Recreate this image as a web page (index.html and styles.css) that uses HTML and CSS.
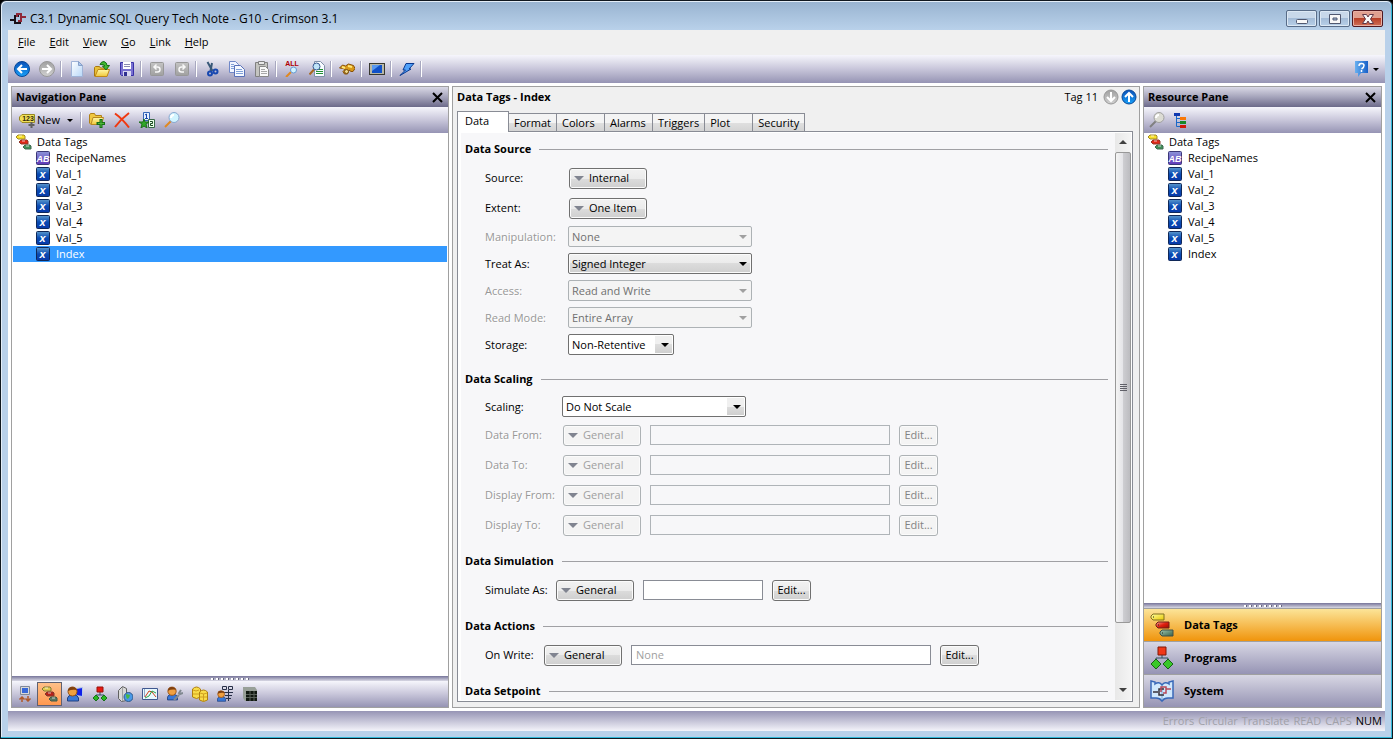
FILE: index.html
```html
<!DOCTYPE html>
<html lang="en">
<head>
  <meta charset="UTF-8" />
  <meta name="viewport" content="width=device-width, initial-scale=1.0" />
  <title>C3.1 Dynamic SQL Query Tech Note - G10 - Crimson 3.1</title>
  <link rel="stylesheet" href="styles.css">
</head>
<body>
  <!-- Shared icons -->
  <svg class="defs" width="0" height="0" aria-hidden="true">
    <defs>
      <linearGradient id="blueBall" x1="0" y1="0" x2="0" y2="1"><stop offset="0" stop-color="#0a50b8"/><stop offset="1" stop-color="#18a0f8"/></linearGradient>
      <linearGradient id="grayBall" x1="0" y1="0" x2="0" y2="1"><stop offset="0" stop-color="#a0a0a0"/><stop offset="1" stop-color="#d0d0d0"/></linearGradient>
      <linearGradient id="grayTile" x1="0" y1="0" x2="0" y2="1"><stop offset="0" stop-color="#c4c4c4"/><stop offset="1" stop-color="#a0a0a0"/></linearGradient>
      <linearGradient id="numberTile" x1="0" y1="0" x2="0" y2="1"><stop offset="0" stop-color="#5a98cc"/><stop offset="0.5" stop-color="#0a4cb4"/><stop offset="1" stop-color="#0838a8"/></linearGradient>
      <linearGradient id="stringTile" x1="0" y1="0" x2="0" y2="1"><stop offset="0" stop-color="#8c94d8"/><stop offset="1" stop-color="#6038b8"/></linearGradient>
      <linearGradient id="yellowTag" x1="0" y1="0" x2="1" y2="1"><stop offset="0" stop-color="#ffffa0"/><stop offset="1" stop-color="#e8c800"/></linearGradient>
      <linearGradient id="redTag" x1="0" y1="0" x2="1" y2="1"><stop offset="0" stop-color="#f8a090"/><stop offset="0.5" stop-color="#e02010"/><stop offset="1" stop-color="#981000"/></linearGradient>
      <linearGradient id="greenTag" x1="0" y1="0" x2="1" y2="1"><stop offset="0" stop-color="#a0c8b0"/><stop offset="1" stop-color="#386048"/></linearGradient>
      <linearGradient id="folder" x1="0" y1="0" x2="0" y2="1"><stop offset="0" stop-color="#fff8a8"/><stop offset="1" stop-color="#f0c838"/></linearGradient>
      <linearGradient id="paper" x1="0" y1="0" x2="1" y2="1"><stop offset="0" stop-color="#ffffff"/><stop offset="1" stop-color="#b8d8f8"/></linearGradient>
      <linearGradient id="helpTile" x1="0" y1="0" x2="1" y2="0"><stop offset="0" stop-color="#68b0f0"/><stop offset="1" stop-color="#1860c8"/></linearGradient>
    </defs>
    <symbol id="tags" viewBox="0 0 24 24">
      <path d="M3 1h11v6H3L1 5V3z" fill="url(#yellowTag)" stroke="#807020"/>
      <path d="M8 9h11v6H8l-2-2v-2z" fill="url(#redTag)" stroke="#702018"/>
      <path d="M12 17h11v6H12l-2-2v-2z" fill="url(#greenTag)" stroke="#405048"/>
      <path d="M3 4h1M8 12h1M12 20h1" stroke="#222"/>
    </symbol>
    <symbol id="tags-small" viewBox="0 0 16 16">
      <path d="M2 1h6l1 1v3H2L0 3z" fill="#f8e028" stroke="#a08828"/>
      <path d="M5 6h6l1 1v3H5L3 8z" fill="#e02818" stroke="#903828"/>
      <path d="M9 11h5l1 1v3H9l-2-2z" fill="#409058" stroke="#406850"/>
      <path d="M3 2h3M6 7h3M10 12h3" stroke="#fff" stroke-opacity="0.7"/>
    </symbol>
    <symbol id="tags-muted" viewBox="0 0 16 16">
      <path d="M2 1h6l1 1v3H2L0 3z" fill="#e0cc50" stroke="#807838"/>
      <path d="M5 6h6l1 1v3H5L3 8z" fill="#b82018" stroke="#803830"/>
      <path d="M9 11h5l1 1v3H9l-2-2z" fill="#587860" stroke="#405848"/>
      <path d="M3 2h3M6 7h3M10 12h3" stroke="#fff" stroke-opacity="0.7"/>
    </symbol>
    <symbol id="tile-x" viewBox="0 0 14 14">
      <rect x="0.5" y="0.5" width="13" height="13" rx="1" fill="url(#numberTile)" stroke="#102858"/>
      <text x="6.500" y="10.500" class="tile-text">x</text>
    </symbol>
    <symbol id="tile-ab" viewBox="0 0 14 14">
      <rect x="0.5" y="0.5" width="13" height="13" rx="1" fill="url(#stringTile)" stroke="#3c3878"/>
      <text x="7" y="10.500" class="tile-text tile-letters">AB</text>
    </symbol>
    <symbol id="programs" viewBox="0 0 24 24">
      <path d="M12 8v4M6 15v-3h12v3" fill="none" stroke="#305060"/>
      <path d="M8 1h8v8H8z" fill="#f03818" stroke="#801808"/>
      <path d="M6 13l5 5-5 5-5-5zM18 13l5 5-5 5-5-5z" fill="#38c828" stroke="#186018"/>
    </symbol>
    <symbol id="programs-small" viewBox="0 0 16 16">
      <path d="M8 6v3M4 12V9h8v3" fill="none" stroke="#305060"/>
      <path d="M5 1h6v5H5z" fill="#e81810" stroke="#981008"/>
      <path d="M4 9l3 3-3 3-3-3zM12 9l3 3-3 3-3-3z" fill="#28b820" stroke="#187018"/>
    </symbol>
    <symbol id="lens" viewBox="0 0 16 16">
      <path d="M1 15l6-6" stroke="#e08820" stroke-width="2"/>
      <circle cx="10" cy="5.500" r="5" fill="#d0f4ff" stroke="#88a8d0"/>
      <path d="M7 6q0-3 3-3" fill="none" stroke="#fff" stroke-width="2"/>
    </symbol>
    <symbol id="lens-off" viewBox="0 0 16 16">
      <path d="M1 15l6-6" stroke="#808080" stroke-width="2"/>
      <circle cx="10" cy="5.500" r="5" fill="#dcdcd4" stroke="#a0a0a0"/>
      <path d="M7 6q0-3 3-3" fill="none" stroke="#fff" stroke-width="2"/>
    </symbol>
    <symbol id="close" viewBox="0 0 11 11">
      <path d="M1 1l9 9M10 1l-9 9" stroke="#000" stroke-width="2"/>
    </symbol>
    <symbol id="user" viewBox="0 0 12 16">
      <path d="M0.500 15v-3q1-3 4-3h3q3 0 4 3v3z" fill="#3878d8" stroke="#204080"/>
      <circle cx="5.500" cy="5.500" r="4.500" fill="#f0a040" stroke="#985010"/>
      <path d="M1 5q0-4 4-4t5 3q-5-1-9 1z" fill="#804010"/>
    </symbol>
  </svg>

  <div class="window">
    <header class="titlebar">
      <svg class="app-logo" width="16" height="12" viewBox="0 0 16 12" fill="none">
        <path d="M0 7h5M9 3H5v7h5V8" stroke="#181018" stroke-width="2"/>
        <path d="M7 4V1h4v7H8M11 4h5" stroke="#902838" stroke-width="2"/>
      </svg>
      <h1 class="window-title">C3.1 Dynamic SQL Query Tech Note - G10 - Crimson 3.1</h1>
      <div class="window-buttons">
        <button class="window-button" aria-label="Minimize"><svg width="12" height="10" viewBox="0 0 12 10"><rect x="0.5" y="5.500" width="11" height="4" rx="1" fill="#f8f8f8" stroke="#505870"/></svg></button>
        <button class="window-button" aria-label="Maximize"><svg width="12" height="10" viewBox="0 0 12 10"><path d="M0.500 0.500h11v9h-11zM4 4h4v2H4z" fill="#f8f8f8" fill-rule="evenodd" stroke="#505870"/></svg></button>
        <button class="window-button window-close" aria-label="Close"><svg width="12" height="10" viewBox="0 0 12 10"><path d="M0.500 0.500h4L6 3l1.500-2.500h4L8.500 5l3 4.500h-4L6 7 4.500 9.500h-4l3-4.500z" fill="#f8f8f8" stroke="#603848"/></svg></button>
      </div>
    </header>

    <div class="client">
      <nav class="menubar">
        <a href="#"><u>F</u>ile</a>
        <a href="#"><u>E</u>dit</a>
        <a href="#"><u>V</u>iew</a>
        <a href="#"><u>G</u>o</a>
        <a href="#"><u>L</u>ink</a>
        <a href="#"><u>H</u>elp</a>
      </nav>

      <div class="toolbar main-toolbar">
        <button class="tool" aria-label="Back"><svg viewBox="0 0 16 16"><circle cx="8" cy="8" r="7.500" fill="url(#blueBall)" stroke="#084898"/><path d="M13 8H4M8 4L4 8l4 4" fill="none" stroke="#fff" stroke-width="2"/></svg></button>
        <button class="tool" aria-label="Forward"><svg viewBox="0 0 16 16"><circle cx="8" cy="8" r="7.500" fill="url(#grayBall)" stroke="#989898"/><path d="M3 8h9M8 4l4 4-4 4" fill="none" stroke="#fff" stroke-width="2"/></svg></button>
        <span class="separator"></span>
        <button class="tool" aria-label="New"><svg viewBox="0 0 16 16"><path d="M2.500 0.500h7l4 4v11h-11z" fill="url(#paper)" stroke="#a0b4d8"/><path d="M9.500 0.500v4h4z" fill="#a8c8f0" stroke="#88a0c8"/></svg></button>
        <button class="tool" aria-label="Open"><svg viewBox="0 0 16 16"><path d="M0.500 15V6.500l1-1h4l1 1.500h6.500V15z" fill="#e8c038" stroke="#a87810"/><path d="M4 8.500h11.500L13 15.500H1z" fill="url(#folder)" stroke="#c08818"/><path d="M6 3.500q1-3 4-3 3 1 3 4h2.500L12 9 8.500 5H11q-1-2-5-1.500z" fill="#40b830" stroke="#187018"/></svg></button>
        <button class="tool" aria-label="Save"><svg viewBox="0 0 16 16"><path d="M1.500 1.500h13v13h-12l-1-1z" fill="#7870d0" stroke="#3830a8"/><path d="M4 1h8v7H4z" fill="#fff"/><path d="M5 3.500h6M5 5.500h6" stroke="#8888b0"/><path d="M4 10h8v5H4z" fill="#d8d8f0"/><path d="M5 11h3v4H5z" fill="#303090"/></svg></button>
        <span class="separator"></span>
        <button class="tool" aria-label="Undo" disabled><svg viewBox="0 0 16 16"><rect x="1.500" y="1.500" width="13" height="13" rx="1" fill="url(#grayTile)" stroke="#989898"/><path d="M5 6h3.500q2.500 0 2.500 2.500T8.500 11H6M7.500 3.500L5 6l2.500 2.500" fill="none" stroke="#f8f8f8" stroke-width="1.500"/></svg></button>
        <button class="tool" aria-label="Redo" disabled><svg viewBox="0 0 16 16"><rect x="1.500" y="1.500" width="13" height="13" rx="1" fill="url(#grayTile)" stroke="#989898"/><path d="M11 6H7.500Q5 6 5 8.500T7.500 11H10M8.500 3.500L11 6 8.500 8.500" fill="none" stroke="#f8f8f8" stroke-width="1.500"/></svg></button>
        <span class="separator"></span>
        <button class="tool" aria-label="Cut"><svg viewBox="0 0 16 16" fill="none"><path d="M3.500 1l5 9M8 2L6.500 10" stroke="#385878" stroke-width="2"/><circle cx="6" cy="12.500" r="2" stroke="#1848b0" stroke-width="2"/><circle cx="11.500" cy="10.500" r="2" stroke="#1848b0" stroke-width="2"/></svg></button>
        <button class="tool" aria-label="Copy"><svg viewBox="0 0 16 16"><path d="M0.500 0.500h6l3 3v8h-9z" fill="#f0f4ff" stroke="#7088c8"/><path d="M5.500 4.500h6l4 4v7h-10z" fill="#f4f8ff" stroke="#5870b8"/><path d="M2 3.500h3M2 5.500h3M2 7.500h3M7 8.500h6M7 10.500h7M7 12.500h7" stroke="#80a0d8"/></svg></button>
        <button class="tool" aria-label="Paste"><svg viewBox="0 0 16 16"><path d="M1.500 1.500h12v14h-12z" fill="#c4c4c0" stroke="#808080"/><path d="M4.500 0.500h6v3h-6z" fill="#e8e8e8" stroke="#808080"/><path d="M5.500 5.500h6l3 3v7h-9z" fill="#f8f8f8" stroke="#888"/><path d="M7 8.500h4M7 10.500h6M7 12.500h6" stroke="#a8a8a8"/></svg></button>
        <span class="separator"></span>
        <button class="tool" aria-label="Find all"><svg viewBox="0 0 16 16"><text x="8" y="5" class="all-text">ALL</text><path d="M2 16l5-5" stroke="#e08820" stroke-width="2"/><circle cx="9.500" cy="9" r="3" fill="#d0f4ff" stroke="#6898d0"/></svg></button>
        <button class="tool" aria-label="Find in page"><svg viewBox="0 0 16 16"><path d="M5.500 0.500h6l4 4v11h-10z" fill="#f8fcff" stroke="#8090a8"/><path d="M10 8.500h4M7 10.500h7M7 12.500h7" stroke="#209030"/><path d="M0.500 13.500l4.500-5" stroke="#a86820" stroke-width="2"/><circle cx="7.500" cy="5.500" r="3.500" fill="#c0e4f8" stroke="#385890"/></svg></button>
        <span class="separator"></span>
        <button class="tool" aria-label="Find tag"><svg viewBox="0 0 16 16"><path d="M0.500 7l3-3 3 1 3-2 5 1.500 1.500 3-2 3h-2L10 9l-1.500 4h-3L4 10.500l2-2-2-1z" fill="#d89818" stroke="#885008"/><path d="M3 6l3 1M9 5l4 1" stroke="#ffe878" stroke-width="2"/><circle cx="7.500" cy="10.500" r="2" fill="#f0d888" stroke="#785010"/></svg></button>
        <span class="separator"></span>
        <button class="tool" aria-label="Display"><svg viewBox="0 0 16 16"><path d="M0 2h16v12H0z" fill="#383830"/><path d="M1 3h14v10H1z" fill="#b8b8a8"/><path d="M3 4h10v8H3z" fill="#1050c8"/><path d="M3 4h8L3 10z" fill="#5898f0"/></svg></button>
        <span class="separator"></span>
        <button class="tool" aria-label="Send"><svg viewBox="0 0 16 16"><path d="M7 2.500h8L10 8h2L1 14.500 6.500 9H4z" fill="#50a0f8" stroke="#083890"/></svg></button>
        <span class="separator"></span>
        <button class="tool help-tool" aria-label="Help"><svg viewBox="0 0 16 16"><path d="M1 0h13v12H7l-3 4v-4H1z" fill="url(#helpTile)"/><path d="M5 5q0-2.500 2.500-2.500T10 4.500 7.500 8M7.500 9v2" fill="none" stroke="#fff" stroke-width="1.500"/></svg><i class="caret"></i></button>
      </div>

      <main class="workspace">
        <section class="pane nav-pane">
          <header class="pane-header">
            <h2>Navigation Pane</h2>
            <button class="pane-close" aria-label="Close navigation pane"><svg width="11" height="11"><use href="#close"/></svg></button>
          </header>
          <div class="toolbar">
            <button class="tool new-tool"><svg viewBox="0 0 16 16"><path d="M3 2.500h12.500v8H3L0.500 8V5z" fill="#f0e058" stroke="#988820"/><text x="9" y="9" class="tag-digits">123</text><path d="M12.500 10v6M9.500 13h6" stroke="#606060" stroke-width="2"/></svg>New <i class="caret"></i></button>
            <span class="separator"></span>
            <button class="tool" aria-label="New folder"><svg viewBox="0 0 16 16"><path d="M0.500 11V3l1-1.500h4l1 2h6v9H2z" fill="#f0c840" stroke="#b08018"/><path d="M4 5.500h10.500l-2 7H2z" fill="url(#folder)" stroke="#b88820"/><path d="M12 7v9M7.500 11.500h9" stroke="#187018" stroke-width="3"/><path d="M12 8v7M9 11.500h6" stroke="#50b838"/></svg></button>
            <button class="tool" aria-label="Delete"><svg viewBox="0 0 16 16"><path d="M1 1.500q7 5 14 14M15 1Q7 7 1 15" fill="none" stroke="#f03810" stroke-width="2"/></svg></button>
            <button class="tool" aria-label="Sort"><svg viewBox="0 0 16 16"><path d="M4.500 0.500h6v8h-6z" fill="#e8f0ff" stroke="#3868b8"/><path d="M6 3l1.500-1v5M6 6.500h3" fill="none" stroke="#1848a8"/><path d="M9.500 7.500h6v8h-6z" fill="#e8ffe8" stroke="#386848"/><path d="M11 9.500h2.500v2H11.500v2H14" fill="none" stroke="#184820"/><path d="M5 7l1 3h4l-3 2 1 4-3-2-3 2 1-4-3-2h4z" fill="#30a828" stroke="#187018"/></svg></button>
            <button class="tool" aria-label="Find"><svg><use href="#lens"/></svg></button>
          </div>
          <ul class="tree">
            <li class="root"><svg><use href="#tags-small"/></svg>Data Tags</li>
            <li><svg><use href="#tile-ab"/></svg>RecipeNames</li>
            <li><svg><use href="#tile-x"/></svg>Val_1</li>
            <li><svg><use href="#tile-x"/></svg>Val_2</li>
            <li><svg><use href="#tile-x"/></svg>Val_3</li>
            <li><svg><use href="#tile-x"/></svg>Val_4</li>
            <li><svg><use href="#tile-x"/></svg>Val_5</li>
            <li class="selected"><svg><use href="#tile-x"/></svg>Index</li>
          </ul>
          <div class="splitter"><i></i></div>
          <div class="toolbar category-bar">
            <button class="tool" aria-label="Communications"><svg viewBox="0 0 16 16"><path d="M3.500 0.500h9v8h-9z" fill="#d8d8d8" stroke="#808898"/><path d="M5 2h6v5H5z" fill="#3868d8"/><path d="M5 16v-5M2.500 13.500L5 11l2.500 2.500M11 10v5M8.500 12.500L11 15l2.500-2.500" fill="none" stroke="#b05828" stroke-width="1.500"/></svg></button>
            <button class="tool active" aria-label="Data tags"><svg><use href="#tags-muted"/></svg></button>
            <button class="tool" aria-label="Display pages"><svg viewBox="0 0 16 16"><path d="M9 2.500l6.500-1v9L9 9.500z" fill="#1020e8" stroke="#b8cce8"/><use href="#user" width="12" height="16"/></svg></button>
            <button class="tool" aria-label="Programs"><svg><use href="#programs-small"/></svg></button>
            <button class="tool" aria-label="Web server"><svg viewBox="0 0 16 16"><path d="M1.500 4.500l4-4 4 2v12l-5 1-3-3z" fill="#d8d8d8" stroke="#606060"/><path d="M5.500 1v14" stroke="#a0a0a0"/><circle cx="11.500" cy="11" r="4.500" fill="#4898e8" stroke="#305888"/><path d="M9 8l4 1-1 3-2 1-1-3z" fill="#48b848"/></svg></button>
            <button class="tool" aria-label="Data logger"><svg viewBox="0 0 16 16"><path d="M0.500 2.500h15v11H0.500z" fill="#e8f8ff" stroke="#405890"/><path d="M2 4h1M2 6h1M2 8h1M2 10h1" stroke="#405890"/><path d="M3 11l4-6 3 1 4 5" fill="none" stroke="#d04018"/><path d="M3 12l4-2 3-5 4 2" fill="none" stroke="#28a048"/></svg></button>
            <button class="tool" aria-label="Security"><svg viewBox="0 0 16 16"><use href="#user" width="11" height="15"/><path d="M7 14l5-5" stroke="#808890" stroke-width="2"/><path d="M14 4l-2 3 1 1 3-1" fill="none" stroke="#808890" stroke-width="2"/></svg></button>
            <button class="tool" aria-label="Databases"><svg viewBox="0 0 16 16"><path d="M0.500 3q4-4 8 0v8q-4 3-8 0z" fill="#f8dc48" stroke="#b08010"/><path d="M7.500 6q4-4 8 0v8q-4 3-8 0z" fill="#f8dc48" stroke="#b08010"/><path d="M1 4q3 2 6 0M1 8h6M8 7q4 2 7 0M8 11h7M11.500 8v7" fill="none" stroke="#d0a020"/></svg></button>
            <button class="tool" aria-label="User network"><svg viewBox="0 0 16 16"><path d="M5.500 0.500h4v3h-4zM11.500 0.500h4v3h-4zM7 6.500h9M11.500 4v11M8 9.500h7M9 12.500h5" fill="none" stroke="#283048"/><use href="#user" y="4" width="9" height="12"/></svg></button>
            <button class="tool" aria-label="Hardware"><svg viewBox="0 0 16 16"><path d="M1 1h12l2 3v11H3l-2-3z" fill="#98a098"/><path d="M4 5h11v10H4z" fill="#101810"/><path d="M4 8.500h11M4 11.500h11M8 5v10M12 5v10" stroke="#586058"/></svg></button>
          </div>
        </section>

        <section class="pane editor">
          <header class="editor-header">
            <h2>Data Tags - Index</h2>
            <span class="tag-number">Tag 11</span>
            <button class="step" aria-label="Next tag" disabled><svg viewBox="0 0 16 16"><circle cx="8" cy="8" r="7" fill="url(#grayBall)" stroke="#989898"/><path d="M8 3v8M4 8l4 4 4-4" fill="none" stroke="#fff" stroke-width="2"/></svg></button>
            <button class="step" aria-label="Previous tag"><svg viewBox="0 0 16 16"><circle cx="8" cy="8" r="7" fill="url(#blueBall)" stroke="#084898"/><path d="M8 13V5M4 8l4-4 4 4" fill="none" stroke="#fff" stroke-width="2"/></svg></button>
          </header>
          <div class="tabs">
            <button class="tab current">Data</button>
            <button class="tab">Format</button>
            <button class="tab">Colors</button>
            <button class="tab">Alarms</button>
            <button class="tab">Triggers</button>
            <button class="tab">Plot</button>
            <button class="tab">Security</button>
          </div>
          <div class="tab-page">
            <form class="properties">
              <section class="group source-group">
                <h3>Data Source</h3>
                <div class="row"><label for="source">Source:</label><button type="button" class="picker" id="source">Internal</button></div>
                <div class="row"><label for="extent">Extent:</label><button type="button" class="picker" id="extent">One Item</button></div>
                <div class="row short disabled"><label for="manipulation">Manipulation:</label><select id="manipulation" disabled><option>None</option></select></div>
                <div class="row short"><label for="treat">Treat As:</label><select id="treat" class="raised"><option>Signed Integer</option></select></div>
                <div class="row short disabled"><label for="access">Access:</label><select id="access" disabled><option>Read and Write</option></select></div>
                <div class="row short disabled"><label for="readmode">Read Mode:</label><select id="readmode" disabled><option>Entire Array</option></select></div>
                <div class="row short"><label for="storage">Storage:</label><select id="storage" class="narrow"><option>Non-Retentive</option></select></div>
              </section>

              <section class="group scaling-group">
                <h3>Data Scaling</h3>
                <div class="row short"><label for="scaling">Scaling:</label><select id="scaling"><option>Do Not Scale</option></select></div>
                <div class="row disabled"><label for="data-from">Data From:</label><button type="button" class="picker" disabled>General</button><input id="data-from" type="text" disabled><button type="button" class="edit" disabled>Edit...</button></div>
                <div class="row disabled"><label for="data-to">Data To:</label><button type="button" class="picker" disabled>General</button><input id="data-to" type="text" disabled><button type="button" class="edit" disabled>Edit...</button></div>
                <div class="row disabled"><label for="display-from">Display From:</label><button type="button" class="picker" disabled>General</button><input id="display-from" type="text" disabled><button type="button" class="edit" disabled>Edit...</button></div>
                <div class="row disabled"><label for="display-to">Display To:</label><button type="button" class="picker" disabled>General</button><input id="display-to" type="text" disabled><button type="button" class="edit" disabled>Edit...</button></div>
              </section>

              <section class="group simulation-group">
                <h3>Data Simulation</h3>
                <div class="row"><label for="simulate">Simulate As:</label><button type="button" class="picker">General</button><input id="simulate" type="text"><button type="button" class="edit">Edit...</button></div>
              </section>

              <section class="group actions-group">
                <h3>Data Actions</h3>
                <div class="row"><label for="on-write">On Write:</label><button type="button" class="picker">General</button><input id="on-write" type="text" placeholder="None"><button type="button" class="edit">Edit...</button></div>
              </section>

              <section class="group">
                <h3>Data Setpoint</h3>
              </section>
            </form>
            <div class="scrollbar">
              <i class="arrow up"></i>
              <div class="track"><div class="thumb"><i></i><i></i><i></i><i></i></div></div>
              <i class="arrow down"></i>
            </div>
          </div>
        </section>

        <section class="pane resource-pane">
          <header class="pane-header">
            <h2>Resource Pane</h2>
            <button class="pane-close" aria-label="Close resource pane"><svg width="11" height="11"><use href="#close"/></svg></button>
          </header>
          <div class="toolbar">
            <button class="tool" aria-label="Find" disabled><svg><use href="#lens-off"/></svg></button>
            <button class="tool" aria-label="Tree view"><svg viewBox="0 0 16 16"><path d="M2.500 3v11.500H6M3 6.500h3M3 10.500h3" fill="none" stroke="#1868c8"/><path d="M0 1h6v3H0z" fill="#1038b0"/><path d="M6 5h6v3H6z" fill="#f87808"/><path d="M6 9h6v3H6z" fill="#188828"/><path d="M6 13h6v3H6z" fill="#d01808"/></svg></button>
          </div>
          <ul class="tree">
            <li class="root"><svg><use href="#tags-small"/></svg>Data Tags</li>
            <li><svg><use href="#tile-ab"/></svg>RecipeNames</li>
            <li><svg><use href="#tile-x"/></svg>Val_1</li>
            <li><svg><use href="#tile-x"/></svg>Val_2</li>
            <li><svg><use href="#tile-x"/></svg>Val_3</li>
            <li><svg><use href="#tile-x"/></svg>Val_4</li>
            <li><svg><use href="#tile-x"/></svg>Val_5</li>
            <li><svg><use href="#tile-x"/></svg>Index</li>
          </ul>
          <div class="splitter"><i></i></div>
          <div class="categories">
            <button class="category chosen"><svg><use href="#tags"/></svg>Data Tags</button>
            <button class="category"><svg><use href="#programs"/></svg>Programs</button>
            <button class="category"><svg viewBox="0 0 24 24"><path d="M1 2l4 1v2q4-3 7 1 3-4 7-1V3l4-1v17h-5q-4 0-6 3-2-3-6-3H1z" fill="#d0e8fc" stroke="#3868b8" stroke-width="1.500"/><path d="M12 6v15" stroke="#78a8d8"/><path d="M3 13h5M14 10H9v6h5" fill="none" stroke="#383038" stroke-width="1.500"/><path d="M11 13V8h5v6h-3M16 10h5" fill="none" stroke="#b84858" stroke-width="1.500"/></svg>System</button>
          </div>
        </section>
      </main>

      <footer class="statusbar">
        <span>Errors</span>
        <span>Circular</span>
        <span>Translate</span>
        <span>READ</span>
        <span>CAPS</span>
        <span class="on">NUM</span>
      </footer>
    </div>
  </div>
</body>
</html>
```
FILE: styles.css
```css
* {
  box-sizing: border-box;
}
body {
  margin: 0;
  background: #000;
  font-family: "Open Sans", "Noto Sans", sans-serif;
  font-size: 11px;
  line-height: 16px;
  color: #000;
}
.defs {
  display: block;
}
h1, h2, h3, ul {
  margin: 0;
  padding: 0;
  font-size: 11px;
}
button, input, select {
  font: inherit;
  color: inherit;
  margin: 0;
}
/* Lettering inside icons */
.tile-text, .all-text, .tag-digits {
  font-family: "Liberation Sans", sans-serif;
  font-weight: bold;
  text-anchor: middle;
}
.tile-text {
  font-size: 11px;
  font-style: italic;
  fill: #fff;
}
.tile-letters {
  font-size: 9px;
}
.all-text {
  font-size: 7px;
  fill: #b00000;
}
.tag-digits {
  font-size: 7px;
  fill: #302808;
}
/* Window frame */
.window {
  height: 100vh;
  min-height: 400px;
  display: flex;
  flex-direction: column;
  padding: 0 7px 7px;
  background: #b9d1ea;
  border: 1px solid #101820;
  border-radius: 6px 6px 0 0;
  box-shadow: inset -1px -1px 0 #30b8d8, inset 1px 1px 0 #e4eef8;
}
.titlebar {
  display: flex;
  align-items: center;
  height: 28px;
  margin: 1px -6px 0;
  padding: 5px 8px 0;
  background: linear-gradient(#99b4d1, #b9d1ea);
  border-radius: 5px 5px 0 0;
}
.window-title {
  flex: 1;
  margin-left: 4px;
  font-size: 12px;
  font-weight: normal;
}
.window-buttons {
  display: flex;
  gap: 2px;
}
.window-button {
  display: flex;
  align-items: center;
  justify-content: center;
  width: 31px;
  height: 17px;
  padding: 0;
  border: 1px solid #586c88;
  border-radius: 2px;
  background: linear-gradient(#c8d8ea 50%, #a4bcd8 50%, #b8d0e8);
  box-shadow: inset 0 0 0 1px #dce8f4;
}
.window-close {
  border-color: #501820;
  background: linear-gradient(#e0a090 50%, #b84028 50%, #d07058);
  box-shadow: inset 0 0 0 1px #e8b0a4;
}
.client {
  flex: 1;
  min-height: 0;
  display: flex;
  flex-direction: column;
  background: #fff;
}
.menubar {
  display: flex;
  align-items: center;
  gap: 14px;
  height: 25px;
  padding: 0 10px 2px;
  background: #f0f0f0;
}
.menubar a {
  color: #000;
  text-decoration: none;
}
/* Toolbars */
.toolbar {
  display: flex;
  align-items: center;
  flex: none;
  height: 26px;
  background: linear-gradient(#f6f6fc, #c8c6da 50%, #9694b4);
}
.main-toolbar {
  height: 28px;
  padding: 0 5px 0 1px;
}
.tool {
  display: flex;
  align-items: center;
  justify-content: center;
  width: 25px;
  height: 24px;
  padding: 0;
  border: 1px solid transparent;
  background: none;
}
.tool svg {
  flex: none;
  width: 16px;
  height: 16px;
}
.tool.active {
  border-color: #606070;
  background: linear-gradient(#ffc088, #ff9850);
}
.separator {
  width: 1px;
  height: 16px;
  margin: 0 2px;
  background: #fff;
  box-shadow: -1px 0 0 #a8a8c0;
}
.caret {
  border: 3px solid transparent;
  border-top-color: #000;
  border-bottom-width: 0;
}
.new-tool {
  width: 67px;
  gap: 2px;
  justify-content: flex-start;
  padding-left: 6px;
}
.new-tool .caret {
  margin-left: 5px;
}
.help-tool {
  width: 28px;
  gap: 3px;
  margin-left: auto;
}
/* Panes */
.workspace {
  flex: 1;
  min-height: 0;
  display: grid;
  grid-template-columns: 438px 1fr 239px;
  gap: 3px;
  padding: 3px;
}
.pane {
  display: flex;
  flex-direction: column;
  min-width: 0;
  min-height: 0;
  border: 1px solid #a0a0a0;
}
.pane-header {
  display: flex;
  align-items: center;
  justify-content: space-between;
  height: 20px;
  padding: 0 5px 0 4px;
  background: linear-gradient(#dad9e6, #a5a4bb 50%, #6c6a8a);
}
.pane-close {
  display: flex;
  padding: 0;
  border: 0;
  background: none;
}
.tree {
  flex: 1;
  min-height: 0;
  padding: 1px;
  list-style: none;
  overflow: hidden;
}
.tree li {
  display: flex;
  align-items: center;
  gap: 6px;
  height: 16px;
  padding-left: 23px;
}
.tree svg {
  width: 14px;
  height: 14px;
}
.tree .root {
  gap: 5px;
  padding-left: 3px;
}
.tree .root svg {
  width: 16px;
  height: 16px;
}
.tree .selected {
  background: #3399ff;
  color: #fff;
}
.splitter {
  display: flex;
  align-items: center;
  justify-content: center;
  height: 5px;
  background: linear-gradient(#77759a, #d8d8e4);
}
.splitter i {
  width: 38px;
  height: 2px;
  background: repeating-linear-gradient(90deg, #fff 0 2px, #686880 2px 3px, transparent 3px 5px);
}
/* Editor */
.editor {
  padding: 0 6px 5px 4px;
  background: #f0f0f0;
}
.editor-header {
  display: flex;
  align-items: center;
  height: 20px;
  margin-right: -4px;
}
.editor-header h2 {
  flex: 1;
}
.tag-number {
  margin-right: 3px;
}
.step {
  width: 16px;
  height: 16px;
  margin-left: 2px;
  padding: 0;
  border: 0;
  background: none;
}
.step svg {
  display: block;
}
.tabs {
  display: flex;
  align-items: flex-end;
  height: 24px;
}
.tab {
  min-width: 48px;
  height: 18px;
  padding: 0 5px;
  text-align: left;
  border: 1px solid #898c95;
  border-left-width: 0;
  border-bottom: 0;
  background: linear-gradient(#f4f4f4 50%, #e0e0e0 50%, #d4d4d4);
}
.tab.current {
  min-width: 52px;
  height: 21px;
  margin-bottom: -1px;
  padding: 0 7px 2px;
  border-left-width: 1px;
  background: #fff;
  z-index: 1;
}
.tab-page {
  flex: 1;
  min-height: 0;
  display: flex;
  padding: 1px;
  border: 1px solid #898c95;
  background: #fff;
}
.properties {
  flex: 1;
  min-width: 0;
  margin-left: 2px;
  padding: 6px 7px 0 4px;
  overflow: hidden;
  background: #f7f7f9;
}
.group {
  margin-bottom: 11px;
}
.group h3 {
  display: flex;
  align-items: center;
  gap: 8px;
  height: 20px;
  margin-bottom: 4px;
}
.group h3::after {
  content: "";
  flex: 1;
  height: 1px;
  background: #a0a0a4;
}
.row {
  display: flex;
  align-items: center;
  gap: 9px;
  height: 30px;
  padding-left: 20px;
}
.row.short {
  height: 27px;
}
.row label {
  flex: none;
  margin-right: -9px;
  white-space: nowrap;
}
.source-group label {
  width: 83px;
}
.scaling-group label {
  width: 77px;
}
.simulation-group label {
  width: 70px;
}
.actions-group label {
  width: 58px;
}
.disabled label {
  color: #989898;
  text-shadow: 1px 1px 0 #fff;
}
.picker, .edit {
  height: 21px;
  padding: 0 4px;
  border: 1px solid #707070;
  border-radius: 3px;
  background: linear-gradient(#f2f2f2, #ebebeb 50%, #dcdcdc 50%, #cfcfcf);
  box-shadow: inset 0 0 0 1px #fbfbfb;
}
.picker {
  display: flex;
  align-items: center;
  gap: 5px;
  width: 78px;
  margin-left: 1px;
}
.picker::before {
  content: "";
  border: 5px solid transparent;
  border-top-color: #808490;
  border-bottom-width: 0;
}
.edit {
  width: 39px;
}
.picker:disabled, .edit:disabled {
  border-color: #adb2b5;
  background: #f4f4f4;
  color: #a0a0a0;
}
.edit:disabled {
  color: #838383;
}
input[type="text"] {
  width: 240px;
  height: 20px;
  padding: 0 4px 2px;
  border: 1px solid #898c95;
  border-radius: 0;
  background: #fff;
}
input[type="text"]:disabled {
  border-color: #afb4b8;
  background: #f7f7f9;
}
input::placeholder {
  color: #a0a0a0;
}
input#simulate {
  width: 120px;
}
input#on-write {
  width: 300px;
}
select {
  appearance: none;
  width: 184px;
  height: 21px;
  padding: 0 18px 0 3px;
  border: 1px solid #707070;
  border-radius: 2px;
  background:
    url("data:image/svg+xml,%3Csvg xmlns='http://www.w3.org/2000/svg' width='8' height='4'%3E%3Cpath d='M0 0h8L4 4z'/%3E%3C/svg%3E") right 4px center no-repeat,
    linear-gradient(#f0f0f0 50%, #dedede 50%, #cfcfcf) right 1px center / 17px 17px no-repeat,
    #fff;
}
select.raised {
  background:
    url("data:image/svg+xml,%3Csvg xmlns='http://www.w3.org/2000/svg' width='8' height='4'%3E%3Cpath d='M0 0h8L4 4z'/%3E%3C/svg%3E") right 4px center no-repeat,
    linear-gradient(#f2f2f2, #ebebeb 50%, #dcdcdc 50%, #cfcfcf);
  box-shadow: inset 0 0 0 1px #fbfbfb;
}
select.narrow {
  width: 106px;
}
select:disabled {
  border-color: #adb2b5;
  color: #707070;
  opacity: 1;
  background:
    url("data:image/svg+xml,%3Csvg xmlns='http://www.w3.org/2000/svg' width='8' height='4'%3E%3Cpath d='M0 0h8L4 4z' fill='%23a0a0a0'/%3E%3C/svg%3E") right 4px center no-repeat,
    #f4f4f4;
}
/* Scrollbar */
.scrollbar {
  display: flex;
  flex-direction: column;
  width: 16px;
  background: linear-gradient(90deg, #e8e8e8, #f4f4f4);
}
.arrow {
  align-self: center;
  margin: 7px 0 8px;
  border: 4px solid transparent;
}
.arrow.up {
  border-top-width: 0;
  border-bottom-color: #404040;
}
.arrow.down {
  border-bottom-width: 0;
  border-top-color: #404040;
}
.track {
  flex: 1;
}
.thumb {
  display: flex;
  flex-direction: column;
  align-items: center;
  justify-content: center;
  gap: 1px;
  height: 89%;
  border: 1px solid #989898;
  border-radius: 2px;
  background: linear-gradient(90deg, #f4f4f4, #e4e4e8 50%, #ceced2 50%, #bcbcc0);
}
.thumb i {
  width: 7px;
  height: 1px;
  background: #606068;
}
/* Resource categories */
.category {
  display: flex;
  align-items: center;
  gap: 10px;
  width: 100%;
  height: 33px;
  padding: 0 6px;
  border: 0;
  border-top: 1px solid #a0a0a0;
  background: linear-gradient(#d8d7e4, #9694b4);
  font-weight: bold;
}
.category svg {
  width: 24px;
  height: 24px;
}
.category.chosen {
  background: linear-gradient(#fce498, #f0940c);
}
.statusbar {
  display: flex;
  align-items: center;
  justify-content: flex-end;
  gap: 4px;
  height: 20px;
  padding-right: 3px;
  background: linear-gradient(#9694b4, #f4f4fa);
  color: #a0a0a8;
}
.statusbar .on {
  color: #000;
}
```
